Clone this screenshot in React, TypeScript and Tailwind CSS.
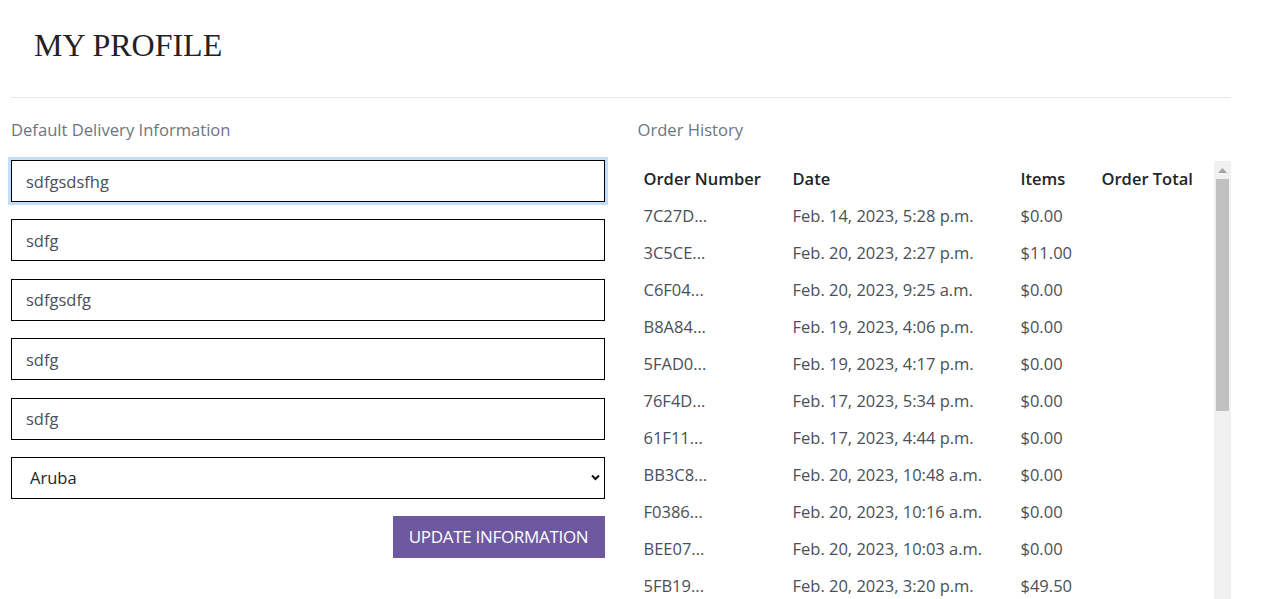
import React from "react";

const orders = [
  { id: "7C27D...", date: "Feb. 14, 2023, 5:28 p.m.", items: "$0.00" },
  { id: "3C5CE...", date: "Feb. 20, 2023, 2:27 p.m.", items: "$11.00" },
  { id: "C6F04...", date: "Feb. 20, 2023, 9:25 a.m.", items: "$0.00" },
  { id: "B8A84...", date: "Feb. 19, 2023, 4:06 p.m.", items: "$0.00" },
  { id: "5FAD0...", date: "Feb. 19, 2023, 4:17 p.m.", items: "$0.00" },
  { id: "76F4D...", date: "Feb. 17, 2023, 5:34 p.m.", items: "$0.00" },
  { id: "61F11...", date: "Feb. 17, 2023, 4:44 p.m.", items: "$0.00" },
  { id: "BB3C8...", date: "Feb. 20, 2023, 10:48 a.m.", items: "$0.00" },
  { id: "F0386...", date: "Feb. 20, 2023, 10:16 a.m.", items: "$0.00" },
  { id: "BEE07...", date: "Feb. 20, 2023, 10:03 a.m.", items: "$0.00" },
  { id: "5FB19...", date: "Feb. 20, 2023, 3:20 p.m.", items: "$49.50" },
];

const fields = ["sdfgsdsfhg", "sdfg", "sdfgsdfg", "sdfg", "sdfg"];

export default function App() {
  return (
    <div className="min-h-[599px] bg-white px-[11px] font-['Open_Sans',sans-serif] text-[#212529]">
      {/* page heading */}
      <div className="pl-[23px] pt-[21px] pb-[28px]">
        <h1 className="font-['Liberation_Serif',serif] text-[32px] leading-[48px] text-[#222]">
          MY PROFILE
        </h1>
      </div>
      <hr className="w-[1220px] border-t border-[#e6e6e6]" />

      <div className="grid w-[1220px] grid-cols-2 gap-x-[33px] pt-[20px]">
        {/* delivery info */}
        <div>
          <p className="h-[24px] text-[16.6px] leading-[24px] text-[#6c757d]">Default Delivery Information</p>
          <form className="mt-[18px] flex flex-col" onSubmit={(e) => e.preventDefault()}>
            {fields.map((v, i) => (
              <input
                key={i}
                defaultValue={v}
                className={
                  "mb-[17.4px] h-[42px] w-full border border-black px-[14px] text-[16.5px] text-[#495057] outline-none " +
                  (i === 0 ? "shadow-[0_0_0_3px_#c5dcfb]" : "")
                }
              />
            ))}
            <div className="relative">
              <select
                defaultValue="Aruba"
                className="h-[42px] w-full appearance-none border border-black bg-white px-[18px] text-[16.5px] text-[#212529] outline-none"
              >
                <option>Aruba</option>
              </select>
              <svg
                className="pointer-events-none absolute right-[5px] top-[17px]"
                width="9"
                height="7"
                viewBox="0 0 9 7"
              >
                <path d="M1 1.5l3.5 3.5L8 1.5" fill="none" stroke="#111" strokeWidth="2" />
              </svg>
            </div>
            <div className="mt-[17px] flex justify-end">
              <button
                type="submit"
                className="h-[42px] w-[212px] bg-[#6e58a0] text-[17px] tracking-[-0.3px] text-white"
              >
                UPDATE INFORMATION
              </button>
            </div>
          </form>
        </div>

        {/* order history */}
        <div>
          <p className="h-[24px] text-[16.6px] leading-[24px] text-[#6c757d]">Order History</p>
          <div className="mt-[19px] flex h-[440px] overflow-hidden">
            <div className="flex-1">
              <table className="w-full table-fixed border-collapse text-left text-[16.5px]">
                <colgroup>
                  <col className="w-[155px]" />
                  <col className="w-[228px]" />
                  <col className="w-[81px]" />
                  <col />
                </colgroup>
                <thead>
                  <tr className="h-[37px]">
                    <th className="pl-[6px] font-semibold">Order Number</th>
                    <th className="font-semibold">Date</th>
                    <th className="font-semibold">Items</th>
                    <th className="font-semibold">Order Total</th>
                  </tr>
                </thead>
                <tbody className="text-[#495057]">
                  {orders.map((o) => (
                    <tr key={o.id} className="h-[37px]">
                      <td className="pl-[6px]">{o.id}</td>
                      <td>{o.date}</td>
                      <td>{o.items}</td>
                      <td></td>
                    </tr>
                  ))}
                </tbody>
              </table>
            </div>
            {/* scrollbar */}
            <div className="flex w-[17px] flex-col bg-[#f1f1f1]">
              <div className="flex h-[18px] items-center justify-center">
                <svg width="9" height="5" viewBox="0 0 9 5">
                  <path d="M0 5L4.5 0L9 5Z" fill="#a3a3a3" />
                </svg>
              </div>
              <div className="mx-[2px] h-[232px] bg-[#c1c1c1]" />
            </div>
          </div>
        </div>
      </div>
    </div>
  );
}
